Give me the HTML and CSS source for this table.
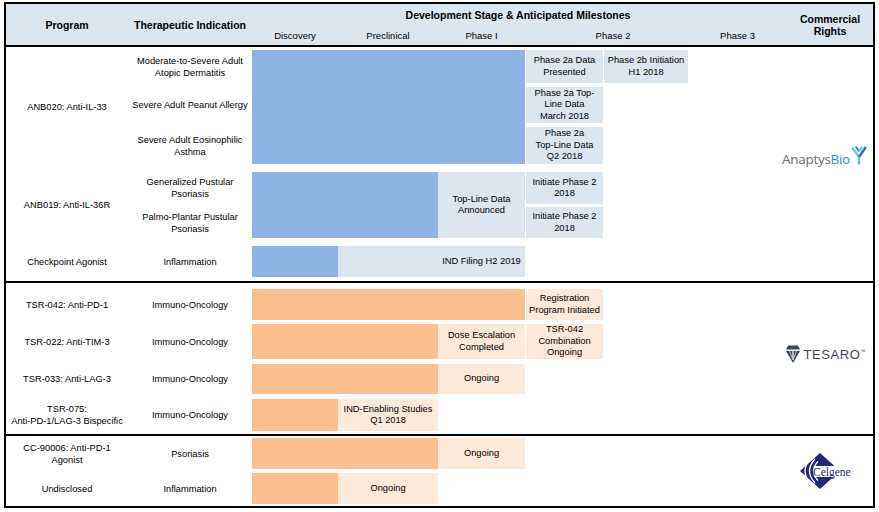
FILE: index.html
```html
<!DOCTYPE html>
<html>
<head>
<meta charset="utf-8">
<link rel="stylesheet" href="styles.css">
</head>
<body>
<div class="sheet">
  <div class="cols head">
    <div class="hb h-prog">Program</div>
    <div class="hb h-ind">Therapeutic Indication</div>
    <div class="hb h-dev">Development Stage &amp; Anticipated Milestones</div>
    <div class="h-ph c3">Discovery</div>
    <div class="h-ph c4">Preclinical</div>
    <div class="h-ph c5">Phase I</div>
    <div class="h-ph c6-8 h-p2">Phase 2</div>
    <div class="h-ph c8 h-p3">Phase 3</div>
    <div class="hb h-comm">Commercial<br>Rights</div>
  </div>

  <div class="cols sec sec-a">
    <div class="cell c1 r1-6">ANB020: Anti-IL-33</div>
    <div class="cell c2 r1">Moderate-to-Severe Adult<br>Atopic Dermatitis</div>
    <div class="cell c2 r3">Severe Adult Peanut Allergy</div>
    <div class="cell c2 r5">Severe Adult Eosinophilic<br>Asthma</div>
    <div class="blue c3-6 r1-6"></div>
    <div class="cell box lt-blue c6 r1">Phase 2a Data<br>Presented</div>
    <div class="cell box lt-blue c7 r1">Phase 2b Initiation<br>H1 2018</div>
    <div class="cell box lt-blue c6 r3">Phase 2a Top-<br>Line Data<br>March 2018</div>
    <div class="cell box lt-blue c6 r5">Phase 2a<br>Top-Line Data<br>Q2 2018</div>

    <div class="cell c1 r7-10">ANB019: Anti-IL-36R</div>
    <div class="cell c2 r7">Generalized Pustular<br>Psoriasis</div>
    <div class="cell c2 r9">Palmo-Plantar Pustular<br>Psoriasis</div>
    <div class="blue c3-5 r7-10"></div>
    <div class="cell box lt-blue c5 r7-10">Top-Line Data<br>Announced</div>
    <div class="cell box lt-blue c6 r7">Initiate Phase 2<br>2018</div>
    <div class="cell box lt-blue c6 r9">Initiate Phase 2<br>2018</div>

    <div class="cell c1 r11">Checkpoint Agonist</div>
    <div class="cell c2 r11">Inflammation</div>
    <div class="blue c3 r11"></div>
    <div class="cell box lt-blue c4-6 r11 split"><span class="tail">IND Filing H2 2019</span></div>

    <div class="logo c9 r1-12 logo-a">
      <span class="anap">Anaptys<span class="bio">Bio</span></span>
      <svg class="ymark" width="16" height="19" viewBox="0 0 16 19">
        <path d="M1.2 1.5 L8 11 L8 18.5" fill="none" stroke="#6cc4d6" stroke-width="2.4"/>
        <path d="M4.8 0.5 L8 5.5" fill="none" stroke="#3b7fc0" stroke-width="2"/>
        <path d="M14.8 1 L8 11" fill="none" stroke="#2f6fb5" stroke-width="2.4"/>
        <path d="M11.2 0.5 L8 5.5" fill="none" stroke="#6cc4d6" stroke-width="2"/>
      </svg>
    </div>
  </div>

  <div class="cols sec sec-b">
    <div class="cell c1 r1">TSR-042: Anti-PD-1</div>
    <div class="cell c2 r1">Immuno-Oncology</div>
    <div class="orange c3-6 r1"></div>
    <div class="cell box lt-orange c6 r1">Registration<br>Program Initiated</div>

    <div class="cell c1 r3">TSR-022: Anti-TIM-3</div>
    <div class="cell c2 r3">Immuno-Oncology</div>
    <div class="orange c3-5 r3"></div>
    <div class="cell box lt-orange c5 r3">Dose Escalation<br>Completed</div>
    <div class="cell box lt-orange c6 r3">TSR-042<br>Combination<br>Ongoing</div>

    <div class="cell c1 r5">TSR-033: Anti-LAG-3</div>
    <div class="cell c2 r5">Immuno-Oncology</div>
    <div class="orange c3-5 r5"></div>
    <div class="cell box lt-orange c5 r5">Ongoing</div>

    <div class="cell c1 r7">TSR-075:<br>Anti-PD-1/LAG-3 Bispecific</div>
    <div class="cell c2 r7">Immuno-Oncology</div>
    <div class="orange c3 r7"></div>
    <div class="cell box lt-orange c4 r7">IND-Enabling Studies<br>Q1 2018</div>

    <div class="logo c9 r1-8 logo-t">
      <svg class="tmark" width="14" height="18" viewBox="0 0 14 18">
        <polygon points="2,0.5 12,0.5 14,4.5 0,4.5" fill="#3c4656"/>
        <polygon points="0,6 14,6 7,18" fill="#3c4656"/>
        <line x1="7" y1="6" x2="7" y2="15" stroke="#fff" stroke-width="1.2"/>
        <line x1="3.5" y1="6" x2="6.2" y2="13" stroke="#fff" stroke-width="0.7"/>
        <line x1="10.5" y1="6" x2="7.8" y2="13" stroke="#fff" stroke-width="0.7"/>
      </svg>
      <span class="tesaro">TESARO<sup class="tm">™</sup></span>
    </div>
  </div>

  <div class="cols sec sec-c">
    <div class="cell c1 r1">CC-90006: Anti-PD-1<br>Agonist</div>
    <div class="cell c2 r1">Psoriasis</div>
    <div class="orange c3-5 r1"></div>
    <div class="cell box lt-orange c5 r1">Ongoing</div>

    <div class="cell c1 r3">Undisclosed</div>
    <div class="cell c2 r3">Inflammation</div>
    <div class="orange c3 r3"></div>
    <div class="cell box lt-orange c4 r3">Ongoing</div>

    <div class="logo c9 r1-4 logo-c">
      <svg width="60" height="40" viewBox="0 0 60 40">
        <polygon points="4,20 24,2 44,20 24,38" fill="#1f2a72"/>
        <path d="M16 6 Q2 20 16 34" fill="none" stroke="#fff" stroke-width="1.3"/>
        <path d="M19 8 Q8 20 19 32" fill="none" stroke="#fff" stroke-width="1.3"/>
        <path d="M22 10.5 Q13 20 22 29.5" fill="none" stroke="#fff" stroke-width="1.3"/>
        <rect x="18" y="15" width="42" height="11" fill="#fff"/>
        <text x="17" y="24.5" class="celg">Celgene</text>
      </svg>
    </div>
  </div>
</div>
</body>
</html>
```

FILE: styles.css
```css
* { box-sizing: border-box; }

body {
  margin: 0;
  background: #fff;
  font-family: "Liberation Sans", Arial, sans-serif;
  color: #000;
}

.sheet {
  margin: 2px 0 0 4px;
  width: 871px;
  height: 506px;
  border: 2px solid #000;
}

.cols {
  display: grid;
  grid-template-columns: 122px 124px 86px 100px 87px 79px 84px 87px 98px;
}

/* header */
.head {
  height: 43px;
  background: #dce6f1;
  border-bottom: 2px solid #000;
  grid-template-rows: 22px 19px;
}
.hb {
  font-weight: bold;
  font-size: 10.5px;
  display: flex;
  align-items: center;
  justify-content: center;
  text-align: center;
  white-space: nowrap;
}
.h-prog { grid-column: 1; grid-row: 1 / 3; padding-top: 1px; }
.h-ind { grid-column: 2; grid-row: 1 / 3; padding-top: 1px; }
.h-dev { grid-column: 3 / 9; grid-row: 1; padding-left: 9px; }
.h-comm { grid-column: 9; grid-row: 1 / 3; line-height: 12px; padding-left: 12px; }
.h-ph {
  grid-row: 2;
  font-size: 9.5px;
  display: flex;
  align-items: center;
  justify-content: center;
  white-space: nowrap;
}
.h-p2 { padding-left: 13px; }
.h-p3 { padding-left: 12px; }

/* sections */
.sec-a {
  height: 234px;
  padding: 3px 0 4px;
  grid-template-rows: 33px 4px 36px 4px 37px 8px 32px 3px 31px 8px 31px;
}
.sec-b {
  height: 153px;
  border-top: 2px solid #000;
  padding: 6px 0 3px;
  grid-template-rows: 31px 4px 35px 5px 30px 5px 32px;
}
.sec-c {
  height: 72px;
  border-top: 2px solid #000;
  padding: 2px 0 2px;
  grid-template-rows: 31px 4px 31px;
}

/* placement */
.c1 { grid-column: 1; }
.c2 { grid-column: 2; }
.c3 { grid-column: 3; }
.c4 { grid-column: 4; }
.c5 { grid-column: 5; }
.c6 { grid-column: 6; }
.c7 { grid-column: 7; }
.c8 { grid-column: 8; }
.c9 { grid-column: 9; }
.c3-5 { grid-column: 3 / 5; }
.c3-6 { grid-column: 3 / 6; }
.c4-6 { grid-column: 4 / 6; }
.c6-8 { grid-column: 6 / 8; }

.r1 { grid-row: 1; }
.r3 { grid-row: 3; }
.r5 { grid-row: 5; }
.r7 { grid-row: 7; }
.r9 { grid-row: 9; }
.r11 { grid-row: 11; }
.r1-4 { grid-row: 1 / 4; }
.r1-6 { grid-row: 1 / 6; }
.r1-8 { grid-row: 1 / 8; }
.r1-12 { grid-row: 1 / 12; }
.r7-10 { grid-row: 7 / 10; }

/* cells */
.cell {
  display: flex;
  align-items: center;
  justify-content: center;
  text-align: center;
  font-size: 9.3px;
  line-height: 12px;
  white-space: nowrap;
}
.box { line-height: 11.5px; }
.box.c6 { margin: 0 1px; }
.split { justify-content: flex-end; }
.tail { width: 87px; text-align: center; }

.blue { background: #8db4e2; }
.lt-blue { background: #dce6f1; }
.orange { background: #fac090; }
.lt-orange { background: #fde9d9; }

/* logos */
.logo {
  display: flex;
  align-items: center;
  justify-content: center;
}
.logo-a { padding-bottom: 14px; padding-left: 1px; }
.anap {
  font-family: "Open Sans", "Liberation Sans", sans-serif;
  font-size: 13.5px;
  color: #6b6d70;
  letter-spacing: -0.3px;
  margin-top: 4px;
}
.bio { color: #3a8ac6; }
.ymark { margin-left: 1px; margin-bottom: 3px; }

.logo-t { padding-bottom: 12px; padding-left: 4px; }
.tmark { margin-right: 3px; }
.tesaro {
  font-family: "Liberation Sans", Arial, sans-serif;
  font-size: 13px;
  letter-spacing: 0.6px;
  color: #3c4656;
}
.tm {
  font-size: 5px;
  vertical-align: 6px;
  letter-spacing: 0;
}

.logo-c { padding-left: 4px; }
.celg {
  font-family: "Liberation Serif", "Times New Roman", serif;
  font-size: 11.5px;
  fill: #1f2a72;
}
```
